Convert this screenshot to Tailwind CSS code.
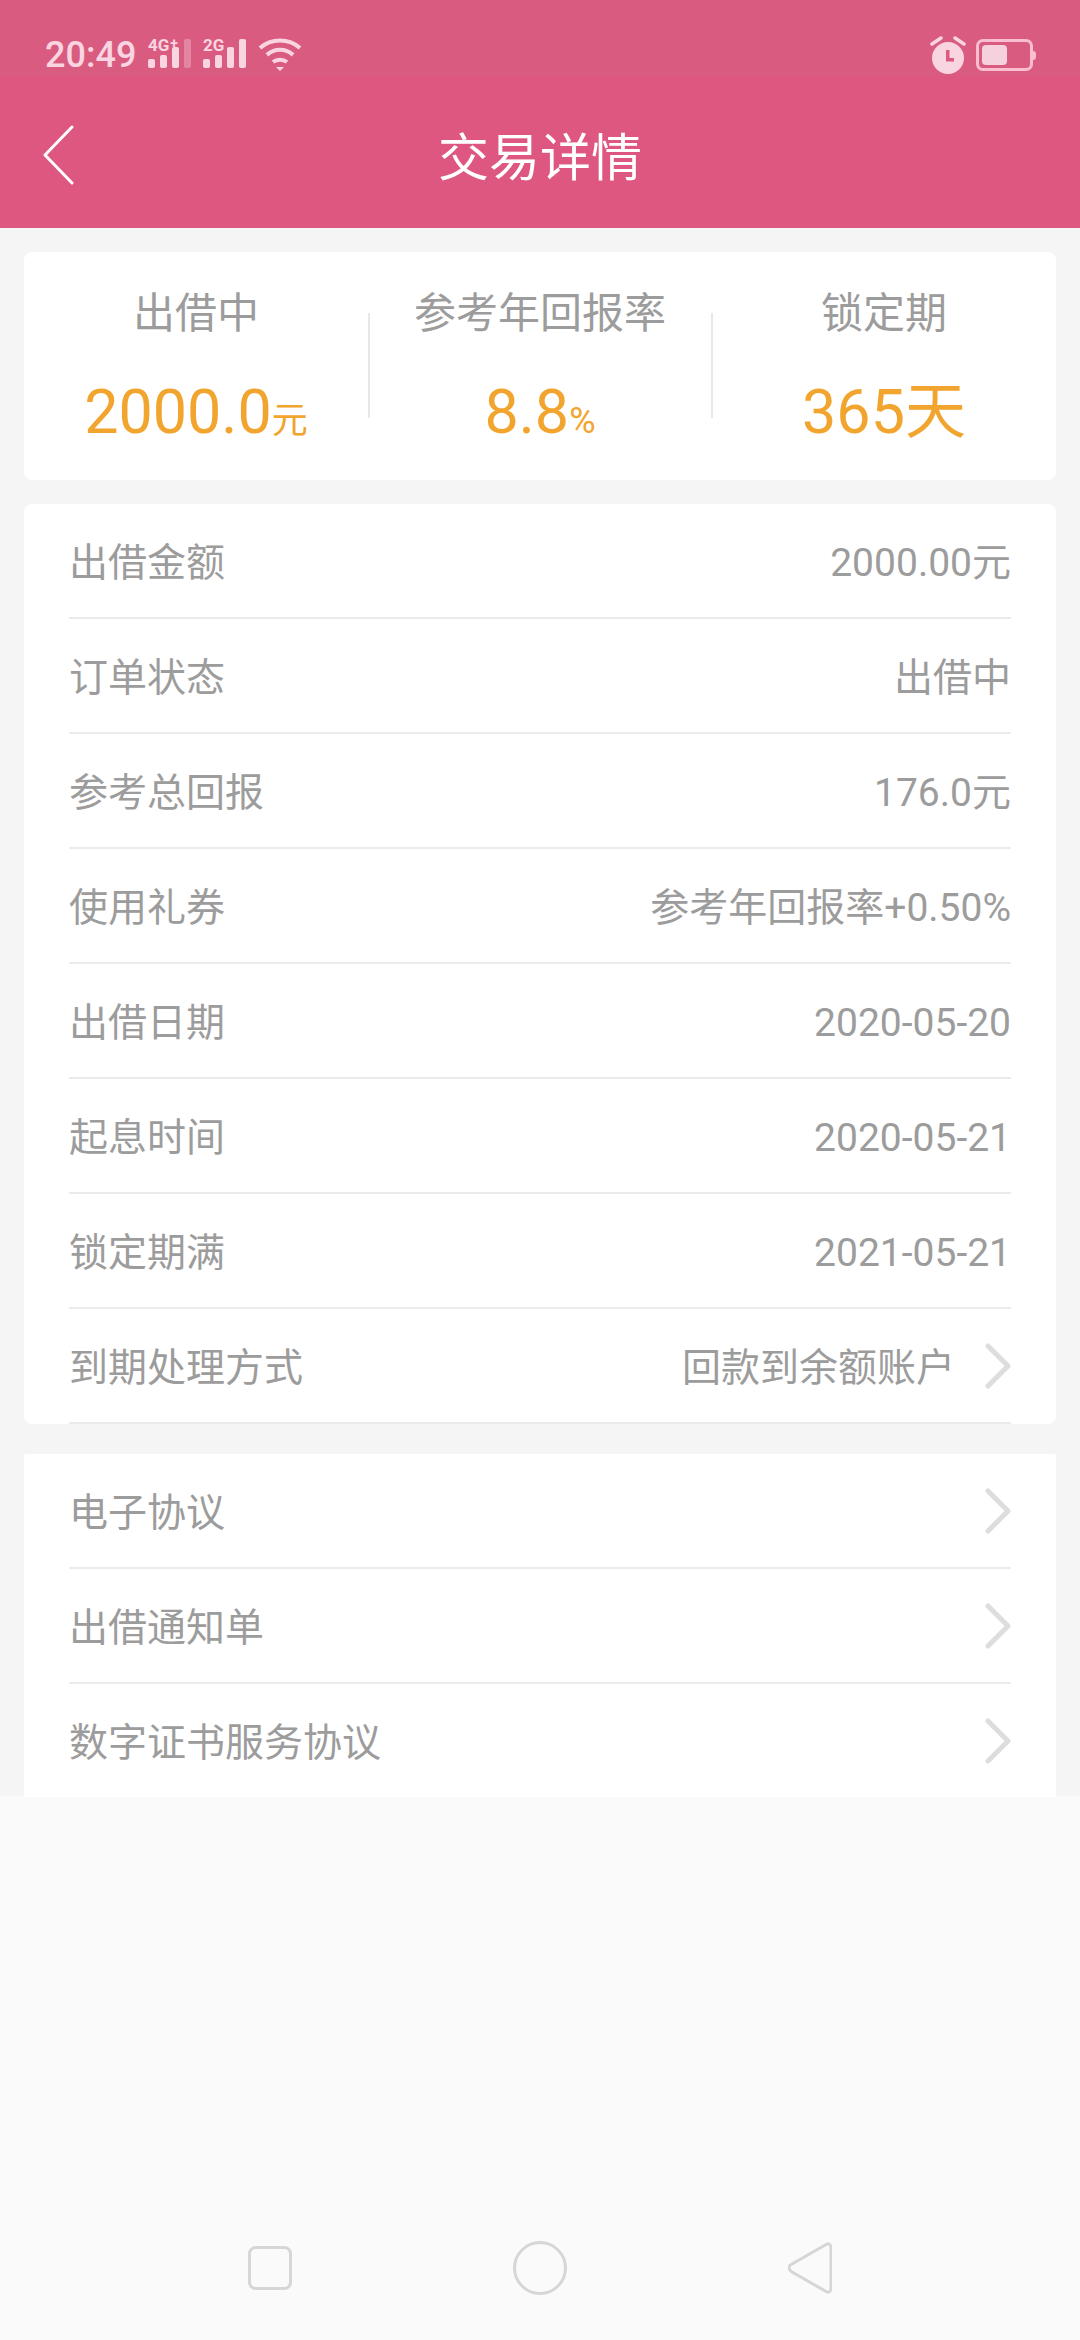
<!DOCTYPE html>
<html lang="zh-CN">
<head>
    <meta charset="UTF-8">
    <meta name="viewport" content="width=device-width, initial-scale=1.0">
    <title>交易详情</title>
    <script src="https://cdn.jsdelivr.net/npm/@tailwindcss/browser@4"></script>
</head>
<body class="w-[1080px] h-[2340px] overflow-hidden flex flex-col bg-[#fafafa] font-['Roboto','Noto_Sans_CJK_SC',sans-serif]">

    <!-- Status bar -->
    <div class="h-[76px] shrink-0 bg-[#d95c80] flex items-center justify-between pt-[34px] pl-[45px] pr-[44px] text-[#f9d5e1]">
        <div class="flex items-center">
            <span class="text-[36px] leading-none font-medium w-[103px]">20:49</span>
            <div class="relative w-[44px] h-[32px] mr-[11px]">
                <span class="absolute left-0 top-[-2px] text-[17px] leading-[16px] font-bold whitespace-nowrap">4G<sup class="text-[14px] leading-none top-[-3px] ml-[1px]">+</sup></span>
                <svg width="44" height="32" viewBox="0 0 44 32" fill="currentColor">
                    <rect x="0" y="20" width="7" height="9" rx="2"/>
                    <rect x="12" y="16" width="7" height="13" rx="2"/>
                    <rect x="24" y="8" width="7" height="21" rx="2"/>
                    <rect x="36" y="0" width="7" height="29" rx="2" fill-opacity="0.35"/>
                </svg>
            </div>
            <div class="relative w-[44px] h-[32px] mr-[11px]">
                <span class="absolute left-0 top-[-2px] text-[17px] leading-[16px] font-bold">2G</span>
                <svg width="44" height="32" viewBox="0 0 44 32" fill="currentColor">
                    <rect x="0" y="20" width="7" height="9" rx="2"/>
                    <rect x="12" y="16" width="7" height="13" rx="2"/>
                    <rect x="24" y="8" width="7" height="21" rx="2"/>
                    <rect x="36" y="0" width="7" height="29" rx="2"/>
                </svg>
            </div>
            <svg width="44" height="34" viewBox="0 0 44 34" fill="none" stroke="currentColor" stroke-width="4">
                <path d="M2 10C13 0 31 0 42 10"/>
                <path d="M9 17C16 10 28 10 35 17"/>
                <path d="M15 24C19 21 25 21 29 24"/>
                <path d="M18 29L26 29L22 33Z" fill="currentColor" stroke="none"/>
            </svg>
        </div>
        <div class="flex items-center gap-[10px]">
            <svg width="36" height="38" viewBox="0 0 36 38" fill="currentColor">
                <circle cx="18" cy="22" r="16"/>
                <path d="M2 8L11 2M34 8L25 2" stroke="currentColor" stroke-width="3.5" stroke-linecap="round"/>
                <path d="M16 14H19.5V22H24V25.5H16Z" fill="#dc5a80"/>
            </svg>
            <div class="flex items-center">
                <div class="w-[57px] h-[32px] rounded-[7px] border-[3px] border-[#fbbdd0] p-[3px]">
                    <div class="w-[25px] h-full rounded-[4px] bg-[#f5d0dd]"></div>
                </div>
                <div class="w-[3px] h-[9px] rounded-r-full bg-[#fbbdd0]"></div>
            </div>
        </div>
    </div>

    <!-- Title bar -->
    <div class="h-[152px] shrink-0 bg-[#de5780] relative flex items-center justify-center pt-[12px]">
        <svg class="absolute left-[42px] top-[49px]" width="33" height="60" viewBox="0 0 33 60" fill="none" stroke="#ffffff" stroke-width="3" stroke-linecap="round" stroke-linejoin="round">
            <path d="M30 2L3 30L30 58"/>
        </svg>
        <h1 class="text-[51px] leading-none text-white font-normal">交易详情</h1>
    </div>

    <!-- Content -->
    <div class="h-[1568px] shrink-0 bg-[#f5f5f5] px-[24px] pt-[24px]">

        <!-- Summary -->
        <div class="h-[228px] bg-white rounded-[8px] grid grid-cols-3 relative">
            <div class="flex flex-col items-center pt-[37px]">
                <div class="text-[42px] leading-[50px] text-[#9c9c9c]">出借中</div>
                <div class="mt-[37px] leading-[72px] text-[#f2a52e] text-[61px]">2000.0<span class="text-[36px]">元</span></div>
            </div>
            <div class="flex flex-col items-center pt-[37px]">
                <div class="text-[42px] leading-[50px] text-[#9c9c9c]">参考年回报率</div>
                <div class="mt-[37px] leading-[72px] text-[#f2a52e] text-[61px]">8.8<span class="text-[36px]">%</span></div>
            </div>
            <div class="flex flex-col items-center pt-[37px]">
                <div class="text-[42px] leading-[50px] text-[#9c9c9c]">锁定期</div>
                <div class="mt-[37px] leading-[72px] text-[#f2a52e] text-[61px]">365天</div>
            </div>
            <div class="absolute left-[344px] top-[61px] w-[2px] h-[105px] bg-[#e8e8e8]"></div>
            <div class="absolute left-[687px] top-[61px] w-[2px] h-[105px] bg-[#e8e8e8]"></div>
        </div>

        <!-- Order details -->
        <div class="mt-[24px] bg-white rounded-[8px] px-[45px] text-[39px] text-[#9c9c9c]">
            <div class="h-[115px] pt-[5px] flex items-center justify-between border-b-2 border-[#ebebeb]"><span>出借金额</span><span>2000.00元</span></div>
            <div class="h-[115px] pt-[5px] flex items-center justify-between border-b-2 border-[#ebebeb]"><span>订单状态</span><span>出借中</span></div>
            <div class="h-[115px] pt-[5px] flex items-center justify-between border-b-2 border-[#ebebeb]"><span>参考总回报</span><span>176.0元</span></div>
            <div class="h-[115px] pt-[5px] flex items-center justify-between border-b-2 border-[#ebebeb]"><span>使用礼券</span><span>参考年回报率+0.50%</span></div>
            <div class="h-[115px] pt-[5px] flex items-center justify-between border-b-2 border-[#ebebeb]"><span>出借日期</span><span>2020-05-20</span></div>
            <div class="h-[115px] pt-[5px] flex items-center justify-between border-b-2 border-[#ebebeb]"><span>起息时间</span><span>2020-05-21</span></div>
            <div class="h-[115px] pt-[5px] flex items-center justify-between border-b-2 border-[#ebebeb]"><span>锁定期满</span><span>2021-05-21</span></div>
            <div class="h-[115px] pt-[5px] flex items-center justify-between border-b-2 border-[#ebebeb]">
                <span>到期处理方式</span>
                <div class="flex items-center gap-[30px]">
                    <span>回款到余额账户</span>
                    <svg class="-mt-[5px]" width="26" height="46" viewBox="0 0 26 46" fill="none" stroke="#dddddd" stroke-width="5" stroke-linecap="round" stroke-linejoin="round"><path d="M3 3L23 23L3 43"/></svg>
                </div>
            </div>
        </div>

        <!-- Documents -->
        <div class="mt-[30px] h-[343px] bg-white rounded-t-[2px] px-[45px] text-[39px] text-[#9c9c9c]">
            <div class="h-[115px] flex items-center justify-between border-b-2 border-[#ebebeb]">
                <span class="pt-[5px]">电子协议</span>
                <svg width="26" height="46" viewBox="0 0 26 46" fill="none" stroke="#dddddd" stroke-width="5" stroke-linecap="round" stroke-linejoin="round"><path d="M3 3L23 23L3 43"/></svg>
            </div>
            <div class="h-[115px] flex items-center justify-between border-b-2 border-[#ebebeb]">
                <span class="pt-[5px]">出借通知单</span>
                <svg width="26" height="46" viewBox="0 0 26 46" fill="none" stroke="#dddddd" stroke-width="5" stroke-linecap="round" stroke-linejoin="round"><path d="M3 3L23 23L3 43"/></svg>
            </div>
            <div class="h-[113px] flex items-center justify-between">
                <span class="pt-[5px]">数字证书服务协议</span>
                <svg width="26" height="46" viewBox="0 0 26 46" fill="none" stroke="#dddddd" stroke-width="5" stroke-linecap="round" stroke-linejoin="round"><path d="M3 3L23 23L3 43"/></svg>
            </div>
        </div>
    </div>

    <!-- Navigation bar -->
    <div class="flex-1 pt-[445px]">
        <div class="flex items-center justify-center gap-[221px] h-[54px]">
            <svg width="44" height="44" viewBox="0 0 44 44" fill="none" stroke="#d6d6d6" stroke-width="3">
                <rect x="1.5" y="1.5" width="41" height="41" rx="6"/>
            </svg>
            <svg width="54" height="54" viewBox="0 0 54 54" fill="none" stroke="#d6d6d6" stroke-width="3">
                <circle cx="27" cy="27" r="25.5"/>
            </svg>
            <svg width="44" height="52" viewBox="0 0 44 52" fill="none" stroke="#d6d6d6" stroke-width="3" stroke-linejoin="round">
                <path d="M39 2C41 1 43 3 43 6V46C43 49 41 51 39 50L4 30C0 27 0 24 4 22Z"/>
            </svg>
        </div>
    </div>
</body>
</html>
